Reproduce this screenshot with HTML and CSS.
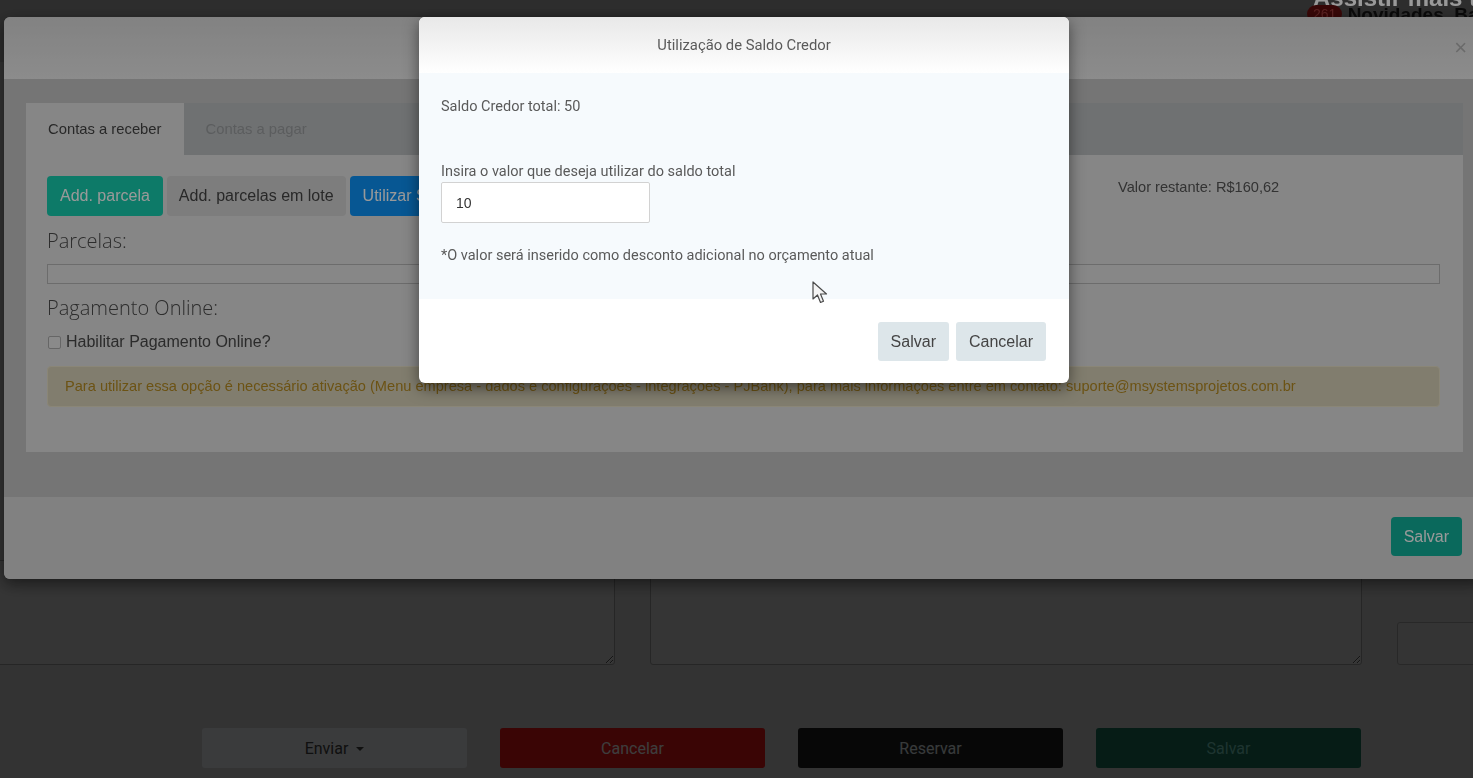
FILE: index.html
```html
<!DOCTYPE html>
<html lang="pt-BR">

<head>
    <meta charset="UTF-8">
    <meta name="viewport" content="width=device-width, initial-scale=1.0">
    <title>Orçamento</title>
    <link rel="stylesheet" href="styles.css">
</head>

<body>
    <header class="topbar"></header>

    <main class="page">
        <div class="notes-row">
            <textarea class="notes"></textarea>
            <textarea class="notes"></textarea>
            <div class="side-field">
                <input type="text" class="side-input">
            </div>
        </div>
        <div class="actions">
            <button class="act act-send">Enviar <span class="caret"></span></button>
            <button class="act act-cancel">Cancelar</button>
            <button class="act act-reserve">Reservar</button>
            <button class="act act-save">Salvar</button>
        </div>
    </main>

    <div class="backdrop backdrop-page"></div>

    <div class="promo">
        <div class="promo-title">Assistir mais tarde</div>
        <div class="promo-sub"><span class="promo-badge">261</span> Novidades, Base de conhecimento</div>
    </div>

    <!-- pagamento -->
    <div class="modal modal-wide">
        <div class="wide-head">
            <button class="close">&times;</button>
        </div>
        <div class="wide-body">
            <div class="tabs">
                <div class="tab active">Contas a receber</div>
                <div class="tab">Contas a pagar</div>
            </div>
            <div class="tab-panel">
                <div class="toolbar">
                    <div class="toolbar-btns">
                        <button class="btn btn-green">Add. parcela</button>
                        <button class="btn btn-gray">Add. parcelas em lote</button>
                        <button class="btn btn-blue">Utilizar Saldo Credor</button>
                    </div>
                    <div class="remaining">Valor restante: R$160,62</div>
                </div>
                <h4 class="section-title">Parcelas:</h4>
                <div class="parcels"></div>
                <h4 class="section-title section-title-online">Pagamento Online:</h4>
                <label class="check-row"><input type="checkbox" class="check"> Habilitar Pagamento Online?</label>
                <div class="alert">Para utilizar essa opção é necessário ativação (Menu empresa - dados e configurações - integrações - PJBank), para mais informações entre em contato: suporte@msystemsprojetos.com.br</div>
            </div>
        </div>
        <div class="wide-foot">
            <button class="btn btn-save">Salvar</button>
        </div>
    </div>

    <div class="backdrop backdrop-modal"></div>

    <!-- saldo credor -->
    <div class="modal modal-small">
        <div class="small-head">Utilização de Saldo Credor</div>
        <div class="small-body">
            <p class="credit-total">Saldo Credor total: 50</p>
            <label class="credit-label" for="credit-value">Insira o valor que deseja utilizar do saldo total</label>
            <input type="text" id="credit-value" class="credit-input" value="10">
            <p class="credit-note">*O valor será inserido como desconto adicional no orçamento atual</p>
        </div>
        <div class="small-foot">
            <button class="btn-light">Salvar</button>
            <button class="btn-light">Cancelar</button>
        </div>
    </div>

    <svg class="cursor" width="22" height="26" viewBox="0 0 22 26">
        <path d="M2 2 L2 19 L6.5 15 L9.5 22.5 L12.5 21.2 L9.5 14 L15.5 14 Z" fill="#f4f4f4" stroke="#4a4a4a" stroke-width="1.2" stroke-linejoin="round"/>
    </svg>
</body>

</html>
```

FILE: styles.css
```css
* {
    box-sizing: border-box;
}

html,
body {
    margin: 0;
    height: 100%;
}

body {
    overflow: hidden;
    background: #d4d4d4;
    font-family: "Liberation Sans", Arial, sans-serif;
    color: #333;
}

button {
    font-family: inherit;
    cursor: pointer;
}

/* page under the modals */

.topbar {
    height: 62px;
    background: #bbbbbb;
}

.page {
    padding-top: 498px;
}

.notes-row {
    display: grid;
    grid-template-columns: 618px 712px 120px;
    column-gap: 35px;
    height: 105px;
    margin-left: -3px;
}

.notes {
    height: 100%;
    background: #dcdcdc;
    border: 1px solid #9e9e9e;
    border-radius: 3px;
}

.side-field {
    align-self: end;
}

.side-input {
    width: 100%;
    height: 43px;
    background: #d8d8d8;
    border: 1px solid #a8a8a8;
    border-radius: 3px;
}

.actions {
    display: grid;
    grid-template-columns: repeat(4, 265px);
    column-gap: 33px;
    padding-left: 202px;
    margin-top: 63px;
}

.act {
    height: 40px;
    border: none;
    border-radius: 3px;
    font-family: Roboto, "Liberation Sans", sans-serif;
    font-size: 16px;
}

.act-send {
    background: #f2f6fa;
    color: #444;
}

.caret {
    display: inline-block;
    margin-left: 4px;
    vertical-align: middle;
    border-top: 4px solid #444;
    border-left: 4px solid transparent;
    border-right: 4px solid transparent;
}

.act-cancel {
    background: #f21515;
    color: #fff;
}

.act-reserve {
    background: #202020;
    color: #e6f2f5;
}

.act-save {
    background: #19755c;
    color: #7dd9c8;
}

.backdrop {
    position: fixed;
    top: 0;
    left: 0;
    width: 100%;
    height: 100%;
}

.backdrop-page {
    background: rgba(0, 0, 0, 0.6);
    z-index: 10;
}

.backdrop-modal {
    background: rgba(0, 0, 0, 0.4);
    z-index: 30;
}

/* floating video card, top right */

.promo {
    position: fixed;
    top: -13px;
    left: 1307px;
    z-index: 11;
    white-space: nowrap;
}

.promo-title {
    padding-left: 6px;
    font-size: 24px;
    line-height: 22px;
    font-weight: bold;
    color: #fff;
}

.promo-sub {
    margin-top: -5px;
    font-size: 19px;
    line-height: 22px;
    font-weight: bold;
    color: #111;
}

.promo-badge {
    display: inline-block;
    padding: 0 6px;
    border-radius: 9px;
    background: #5e0d0d;
    color: #9a3b3b;
    font-size: 14px;
    line-height: 18px;
    font-weight: normal;
    vertical-align: 2px;
}

/* modals */

.modal {
    position: fixed;
    top: 17px;
    border-radius: 6px;
    overflow: hidden;
    box-shadow: 0 5px 15px rgba(0, 0, 0, 0.5);
}

.modal-wide {
    left: 4px;
    width: 1481px;
    background: #c4c4c4;
    z-index: 20;
}

.wide-head {
    display: flex;
    justify-content: flex-end;
    align-items: center;
    height: 62px;
    padding-right: 18px;
    background: linear-gradient(#d9d9d9, #e9e9e9);
}

.close {
    padding: 0;
    border: none;
    background: none;
    font-size: 22px;
    line-height: 1;
    color: #b1b1b1;
}

.wide-body {
    padding: 24px 22px 45px;
}

.tabs {
    display: flex;
    height: 52px;
    background: #b9bcbe;
}

.tab {
    padding: 0 22px;
    line-height: 52px;
    font-size: 14.8px;
    color: #989b9d;
}

.tab.active {
    background: #dfdfdf;
    color: #444;
}

.tab-panel {
    padding: 21px 23px 45px 21px;
    background: #dfdfdf;
}

.toolbar {
    display: flex;
}

.toolbar-btns {
    display: flex;
    gap: 4px;
}

.btn {
    height: 40px;
    padding: 0 13px;
    border: none;
    border-radius: 4px;
    font-size: 16px;
    color: #fff;
}

.btn-green {
    background: #17cbad;
}

.btn-gray {
    padding: 0 12px;
    background: #d0d0d0;
    color: #444;
}

.btn-blue {
    background: #0d92f5;
}

.remaining {
    width: 322px;
    margin-left: auto;
    padding-top: 1px;
    line-height: 20px;
    font-size: 14.6px;
    color: #555;
}

.section-title {
    margin: 10px 0 0;
    font-family: "Open Sans", sans-serif;
    font-size: 20px;
    font-weight: 300;
    line-height: 30px;
    color: #4b4b4b;
}

.section-title-online {
    margin-top: 9px;
}

.parcels {
    height: 20px;
    margin-top: 8px;
    background: #e1e1e1;
    border: 1px solid #b4b4b4;
}

.check-row {
    display: flex;
    align-items: center;
    gap: 5px;
    margin-top: 9px;
    line-height: 20px;
    font-size: 16px;
    color: #484848;
}

.check {
    appearance: none;
    width: 13px;
    height: 13px;
    margin: 0 0 0 1px;
    background: #e6e6e6;
    border: 1px solid #ababab;
    border-radius: 2px;
}

.alert {
    margin-top: 14px;
    padding: 0 17px;
    line-height: 39px;
    font-size: 14.6px;
    color: #b48a22;
    background: #d8d1b8;
    border: 1px solid #e6e0c6;
    border-radius: 4px;
    white-space: nowrap;
}

.wide-foot {
    display: flex;
    justify-content: flex-end;
    height: 82px;
    padding: 20px 23px;
    background: #d8d8d8;
}

.btn-save {
    height: 39px;
    background: #11b09a;
}

.modal-small {
    left: 419px;
    width: 650px;
    background: #fff;
    z-index: 40;
    font-family: Roboto, "Liberation Sans", sans-serif;
}

.small-head {
    height: 56px;
    line-height: 56px;
    text-align: center;
    font-size: 14.8px;
    color: #5a5a5a;
    background: linear-gradient(#e8e8e8, #fff);
}

.small-body {
    padding: 24px 22px 33px;
    background: #f6fafd;
    font-size: 14.5px;
    color: #5a5a5a;
}

.credit-total,
.credit-note {
    margin: 0;
    line-height: 20px;
}

.credit-label {
    display: block;
    margin-top: 45px;
    line-height: 20px;
}

.credit-input {
    display: block;
    width: 209px;
    height: 41px;
    margin-top: 0;
    padding: 0 14px;
    border: 1px solid #d2d2d2;
    border-radius: 2px;
    font-family: "Liberation Sans", Arial, sans-serif;
    font-size: 14px;
    color: #333;
    background: #fff;
}

.credit-note {
    margin-top: 23px;
}

.small-foot {
    display: flex;
    justify-content: flex-end;
    gap: 7px;
    padding: 23px 23px 22px;
}

.btn-light {
    height: 39px;
    padding: 0 13px;
    border: none;
    border-radius: 3px;
    background: #dde6ea;
    font-family: "Liberation Sans", Arial, sans-serif;
    font-size: 16px;
    color: #444;
}

.cursor {
    position: fixed;
    top: 280px;
    left: 811px;
    z-index: 50;
}
```
